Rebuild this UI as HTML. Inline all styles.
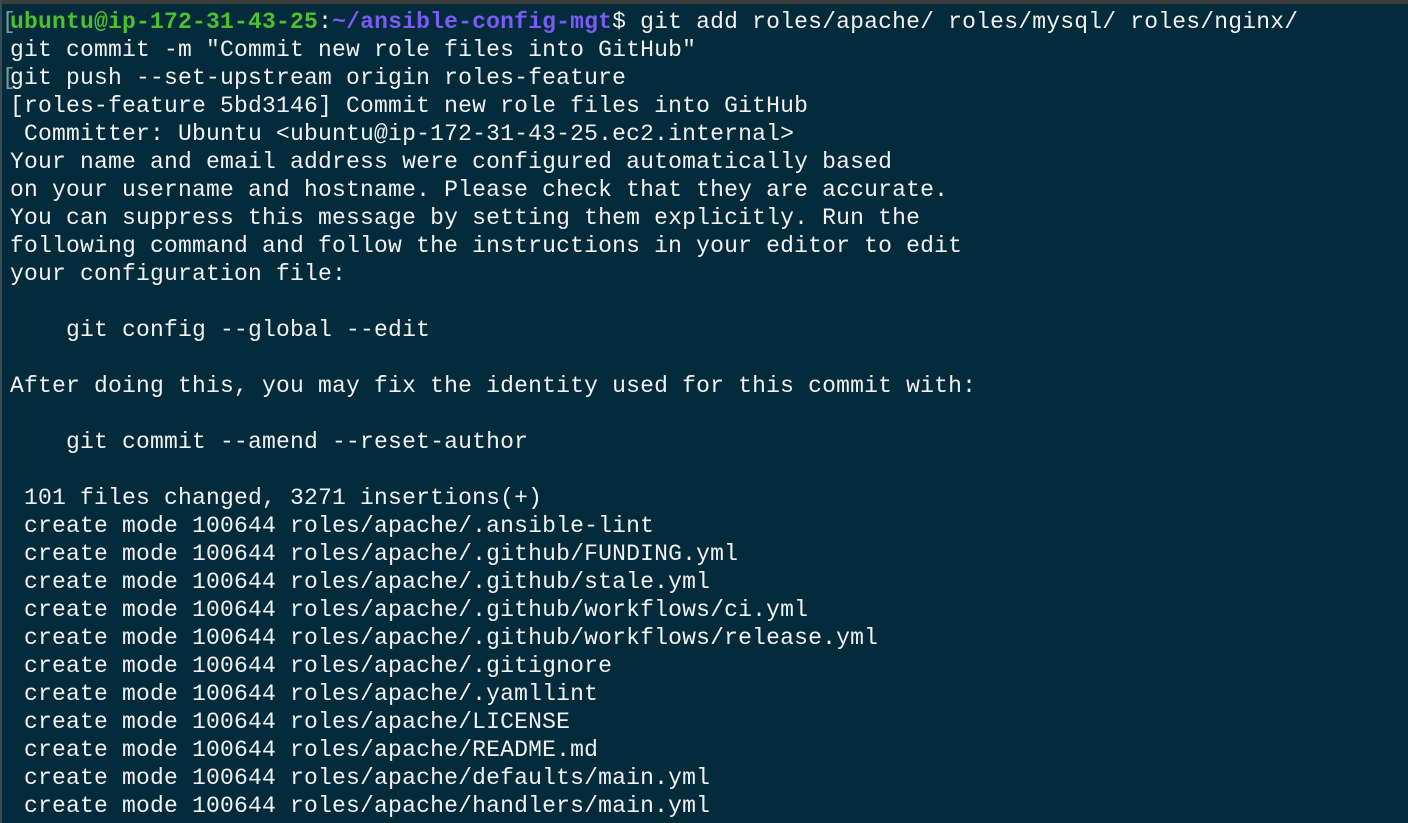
<!DOCTYPE html>
<html><head><meta charset="utf-8"><style>
html,body{margin:0;padding:0;width:1408px;height:823px;overflow:hidden;background:#032b3b;}
.top{position:absolute;left:0;top:0;width:1408px;height:4px;background:#3d3d3d;}
.left{position:absolute;left:0;top:0;width:2px;height:823px;background:#3d4a50;}
pre{position:absolute;left:10px;top:8px;margin:0;font-family:"Liberation Mono",monospace;font-size:23px;line-height:28px;color:#f2f2f2;letter-spacing:0.2px;}
.g{color:#4cc12c;font-weight:bold}.p{color:#7a5cf5;font-weight:bold}
.br{position:absolute;left:2px;font-family:"Liberation Mono",monospace;font-size:23px;line-height:28px;color:#7f97a3;}
</style></head><body>
<div class="top"></div><div class="left"></div>
<div class="br" style="top:8px">[</div>
<div class="br" style="top:64px">[</div>
<pre><span class="g">ubuntu@ip-172-31-43-25</span>:<span class="p">~/ansible-config-mgt</span>$ git add roles/apache/ roles/mysql/ roles/nginx/
git commit -m "Commit new role files into GitHub"
git push --set-upstream origin roles-feature
[roles-feature 5bd3146] Commit new role files into GitHub
 Committer: Ubuntu &lt;ubuntu@ip-172-31-43-25.ec2.internal&gt;
Your name and email address were configured automatically based
on your username and hostname. Please check that they are accurate.
You can suppress this message by setting them explicitly. Run the
following command and follow the instructions in your editor to edit
your configuration file:

    git config --global --edit

After doing this, you may fix the identity used for this commit with:

    git commit --amend --reset-author

 101 files changed, 3271 insertions(+)
 create mode 100644 roles/apache/.ansible-lint
 create mode 100644 roles/apache/.github/FUNDING.yml
 create mode 100644 roles/apache/.github/stale.yml
 create mode 100644 roles/apache/.github/workflows/ci.yml
 create mode 100644 roles/apache/.github/workflows/release.yml
 create mode 100644 roles/apache/.gitignore
 create mode 100644 roles/apache/.yamllint
 create mode 100644 roles/apache/LICENSE
 create mode 100644 roles/apache/README.md
 create mode 100644 roles/apache/defaults/main.yml
 create mode 100644 roles/apache/handlers/main.yml</pre>
</body></html>
